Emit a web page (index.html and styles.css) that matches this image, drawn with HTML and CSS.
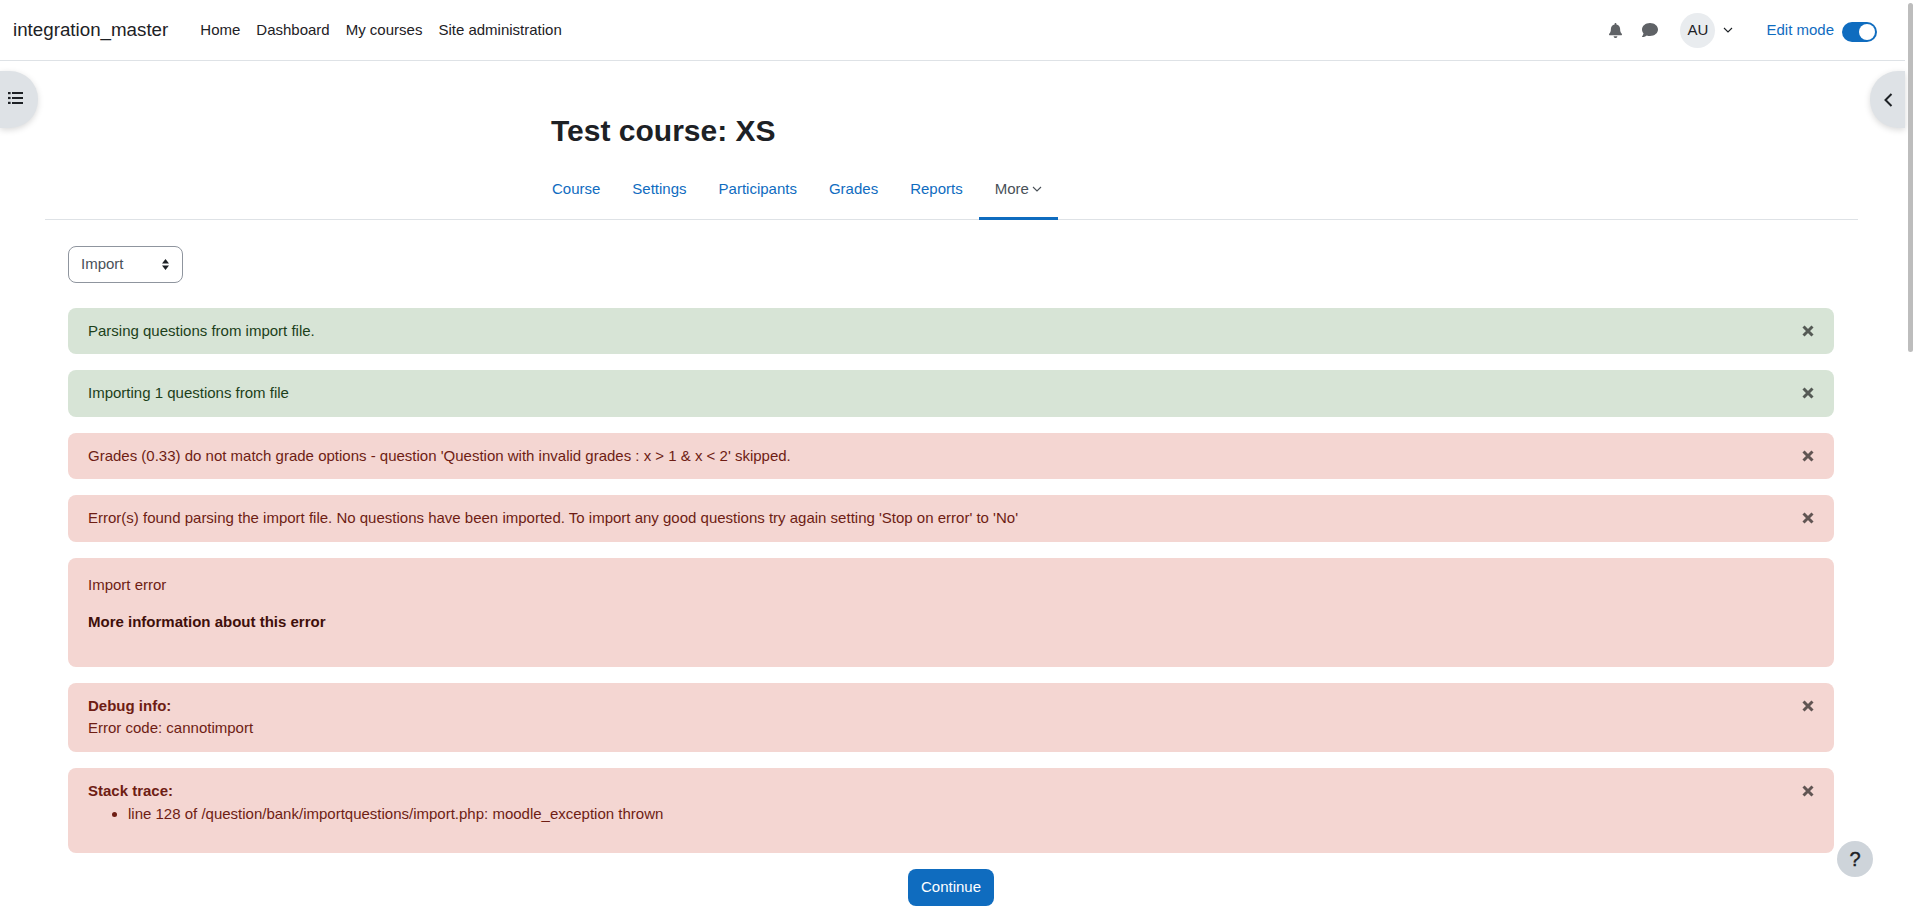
FILE: index.html
```html
<!DOCTYPE html>
<html lang="en">
<head>
<meta charset="utf-8">
<title>Test course: XS</title>
<link rel="stylesheet" href="styles.css">
</head>
<body>
<div class="page">
  <header class="navbar">
    <a class="brand">integration_master</a>
    <nav class="primary">
      <a>Home</a><a>Dashboard</a><a>My courses</a><a>Site administration</a>
    </nav>
    <div class="usernav">
      <svg class="ic-bell" viewBox="0 0 448 512" preserveAspectRatio="none"><path d="M224 0c-17.7 0-32 14.3-32 32v19.2C119 66 64 130.600 64 208v18.800c0 47-17.300 92.400-48.500 127.600l-7.400 8.300c-8.400 9.400-10.400 22.900-5.300 34.400S19.400 416 32 416h384c12.600 0 24-7.400 29.200-18.900s3.100-25-5.300-34.400l-7.400-8.300c-31.200-35.200-48.500-80.500-48.500-127.600V208c0-77.400-55-142-128-156.800V32c0-17.700-14.300-32-32-32zm45.300 493.300c12-12 18.700-28.300 18.700-45.300H160c0 17 6.700 33.300 18.700 45.300s28.300 18.700 45.300 18.700 33.300-6.700 45.300-18.700z"/></svg>
      <svg class="ic-msg" viewBox="0 0 512 512"><path d="M512 240c0 114.900-114.600 208-256 208-37.100 0-72.300-6.400-104.100-17.900-11.900 8.700-31.300 20.600-54.300 30.600C73.600 471.100 44.700 480 16 480c-6.500 0-12.300-3.900-14.800-9.900s-1.100-12.800 3.400-17.400l.3-.3c.3-.3.7-.7 1.300-1.400 1.100-1.200 2.800-3.100 4.900-5.700 4.100-5 9.600-12.400 15.200-21.600 10-16.600 19.500-38.400 21.400-62.900C17.700 326.800 0 285.100 0 240 0 125.100 114.600 32 256 32s256 93.100 256 208z"/></svg>
      <span class="avatar">AU</span>
      <svg class="ic-caret user" viewBox="0 0 12 12"><path d="M2 4 6 8l4-4"/></svg>
      <span class="editlabel">Edit mode</span>
      <span class="toggle"><span class="knob"></span></span>
    </div>
  </header>

  <button class="drawer-btn left" aria-label="Open course index">
    <svg viewBox="0 0 15 12"><path d="M4 1h11M4 6h11M4 11h11" class="lines"/><rect x="0" y="0" width="2.600" height="2.200"/><rect x="0" y="4.900" width="2.600" height="2.200"/><rect x="0" y="9.800" width="2.600" height="2.200"/></svg>
  </button>
  <button class="drawer-btn right" aria-label="Open block drawer">
    <svg viewBox="0 0 12 18"><path d="M9.500 3 3.500 9l6 6"/></svg>
  </button>

  <section class="course-head">
    <h1>Test course: XS</h1>
    <nav class="tabs">
      <a>Course</a><a>Settings</a><a>Participants</a><a>Grades</a><a>Reports</a>
      <a class="active">More<svg class="ic-caret small" viewBox="0 0 12 12"><path d="M2 4 6 8l4-4"/></svg></a>
    </nav>
  </section>

  <main class="content">
    <div class="select">
      <span>Import</span>
      <svg viewBox="0 0 7 11"><path d="M3.500 0 7 4.500H0zM3.500 11 0 6.500h7z"/></svg>
    </div>

    <div class="alert success">Parsing questions from import file.<svg class="close" viewBox="0 0 12 12"><path d="M1.500 1.500l9 9M10.500 1.500l-9 9"/></svg></div>
    <div class="alert success">Importing 1 questions from file<svg class="close" viewBox="0 0 12 12"><path d="M1.500 1.500l9 9M10.500 1.500l-9 9"/></svg></div>
    <div class="alert danger">Grades (0.33) do not match grade options - question 'Question with invalid grades : x &gt; 1 &amp; x &lt; 2' skipped.<svg class="close" viewBox="0 0 12 12"><path d="M1.500 1.500l9 9M10.500 1.500l-9 9"/></svg></div>
    <div class="alert danger">Error(s) found parsing the import file. No questions have been imported. To import any good questions try again setting 'Stop on error' to 'No'<svg class="close" viewBox="0 0 12 12"><path d="M1.500 1.500l9 9M10.500 1.500l-9 9"/></svg></div>
    <div class="alert danger block">
      <p>Import error</p>
      <p class="more">More information about this error</p>
    </div>
    <div class="alert danger">
      <strong>Debug info:</strong><br>Error code: cannotimport
      <svg class="close" viewBox="0 0 12 12"><path d="M1.500 1.500l9 9M10.500 1.500l-9 9"/></svg>
    </div>
    <div class="alert danger">
      <strong>Stack trace:</strong>
      <ul><li>line 128 of /question/bank/importquestions/import.php: moodle_exception thrown</li></ul>
      <svg class="close" viewBox="0 0 12 12"><path d="M1.500 1.500l9 9M10.500 1.500l-9 9"/></svg>
    </div>
    <div class="actions"><button class="primary-btn">Continue</button></div>
  </main>
</div>
<button class="help">?</button>
<div class="scrollthumb"></div>
</body>
</html>
```
FILE: styles.css
```css
html, body {
  margin: 0;
  height: 908px;
  overflow: hidden;
  background: #fff;
}
body {
  font-family: "Liberation Sans", Arial, sans-serif;
  font-size: 15px;
  line-height: 22.5px;
  color: #1d2125;
}
.page {
  width: 1905px;
  position: relative;
}
.navbar {
  height: 60px;
  border-bottom: 1px solid #dee2e6;
  display: flex;
  align-items: center;
  padding: 0 28px 0 13px;
}
.brand {
  font-size: 18.750px;
  margin-right: 32px;
}
.primary {
  display: flex;
  gap: 16px;
}
.usernav {
  margin-left: auto;
  display: flex;
  align-items: center;
}
.ic-bell, .ic-msg {
  fill: #5f6266;
}
.ic-bell {
  width: 13px;
  height: 15px;
}
.ic-msg {
  width: 16px;
  height: 16px;
  margin-left: 20px;
}
.avatar {
  width: 35px;
  height: 35px;
  border-radius: 50%;
  background: #e9ecef;
  margin-left: 22px;
  display: flex;
  align-items: center;
  justify-content: center;
}
.ic-caret {
  width: 12px;
  height: 12px;
  fill: none;
  stroke: #1d2125;
  stroke-width: 1.100;
}
.ic-caret.user {
  margin-left: 7px;
}
.ic-caret.small {
  margin: 0 -1px 0 2px;
  stroke: #495057;
  vertical-align: -1px;
}
.editlabel {
  color: #0f6cbf;
  margin-left: 32px;
}
.toggle {
  width: 35px;
  height: 20px;
  border-radius: 10px;
  background: #0f6cbf;
  margin: 4px 0 0 8px;
  position: relative;
}
.knob {
  position: absolute;
  right: 2px;
  top: 2px;
  width: 16px;
  height: 16px;
  border-radius: 50%;
  background: #fff;
}
.drawer-btn {
  position: absolute;
  top: 71px;
  height: 57px;
  border: 0;
  background: #dee2e6;
  box-shadow: 0 2px 6px rgba(0, 0, 0, .15);
  display: flex;
  align-items: center;
  box-sizing: border-box;
}
.drawer-btn.left {
  left: 0;
  width: 38px;
  border-radius: 0 28px 28px 0;
  justify-content: flex-start;
  padding: 0 0 3px 8px;
}
.drawer-btn.left svg {
  width: 15px;
  height: 12px;
  fill: #1d2125;
}
.lines {
  stroke: #1d2125;
  stroke-width: 1.800;
  fill: none;
}
.drawer-btn.right {
  right: 0;
  width: 35px;
  border-radius: 28px 0 0 28px;
  justify-content: flex-end;
  padding: 0 11px 0 0;
}
.drawer-btn.right svg {
  width: 12px;
  height: 18px;
  fill: none;
  stroke: #1d2125;
  stroke-width: 2;
}
.course-head {
  margin: 0 47px 0 45px;
  border-bottom: 1px solid #dee2e6;
  padding-left: 506px;
  height: 159px;
  box-sizing: border-box;
}
h1 {
  margin: 0;
  padding-top: 52px;
  font-size: 30px;
  line-height: 36px;
  font-weight: 700;
  color: #1d2125;
}
.tabs {
  display: flex;
  margin-top: 15px;
  margin-left: -15px;
  height: 56px;
}
.tabs a {
  color: #0f6cbf;
  padding: 14px 16px 0;
  box-sizing: border-box;
  height: 56px;
}
.tabs a.active {
  color: #495057;
  border-bottom: 3px solid #0f6cbf;
}
.content {
  padding: 26px 71px 0 68px;
}
.select {
  width: 115px;
  height: 37px;
  box-sizing: border-box;
  border: 1px solid #8f959e;
  border-radius: 8px;
  padding: 0 13px 0 12px;
  color: #495057;
  display: flex;
  align-items: center;
  justify-content: space-between;
  margin-bottom: 24.500px;
}
.select svg {
  width: 7px;
  height: 11px;
  fill: #1d2125;
}
.alert {
  position: relative;
  border-radius: 8px;
  padding: 12px 20px;
  margin-bottom: 16px;
}
.alert.success {
  background: #d7e4d6;
  color: #1c3f1a;
}
.alert.danger {
  background: #f4d6d2;
  color: #6e1d14;
}
.alert p {
  margin: 0 0 15px;
}
.alert .more {
  font-weight: 700;
  color: #3f0f0a;
}
.alert.block {
  padding: 16px 20px 18px;
}
.alert ul {
  margin: 0 0 15px;
  padding: 1px 0 0 40px;
}
.close {
  position: absolute;
  right: 20px;
  top: 17px;
  width: 12px;
  height: 12px;
  fill: none;
  stroke: #000;
  stroke-width: 3;
  opacity: .6;
}
.actions {
  display: flex;
  justify-content: center;
}
.primary-btn {
  width: 86px;
  height: 37px;
  font: inherit;
  color: #fff;
  background: #0f6cbf;
  border: 0;
  border-radius: 8px;
}
.help {
  position: fixed;
  left: 1837px;
  top: 841px;
  width: 36px;
  height: 36px;
  border: 0;
  border-radius: 50%;
  background: #ced4da;
  font: 400 20px "Liberation Sans", Arial, sans-serif;
  -webkit-text-stroke: .4px #1d2125;
  color: #1d2125;
  padding: 0;
}
.scrollthumb {
  position: fixed;
  left: 1908px;
  top: 3px;
  width: 5px;
  height: 349px;
  background: #bdbdbd;
  border-radius: 3px;
}
```
